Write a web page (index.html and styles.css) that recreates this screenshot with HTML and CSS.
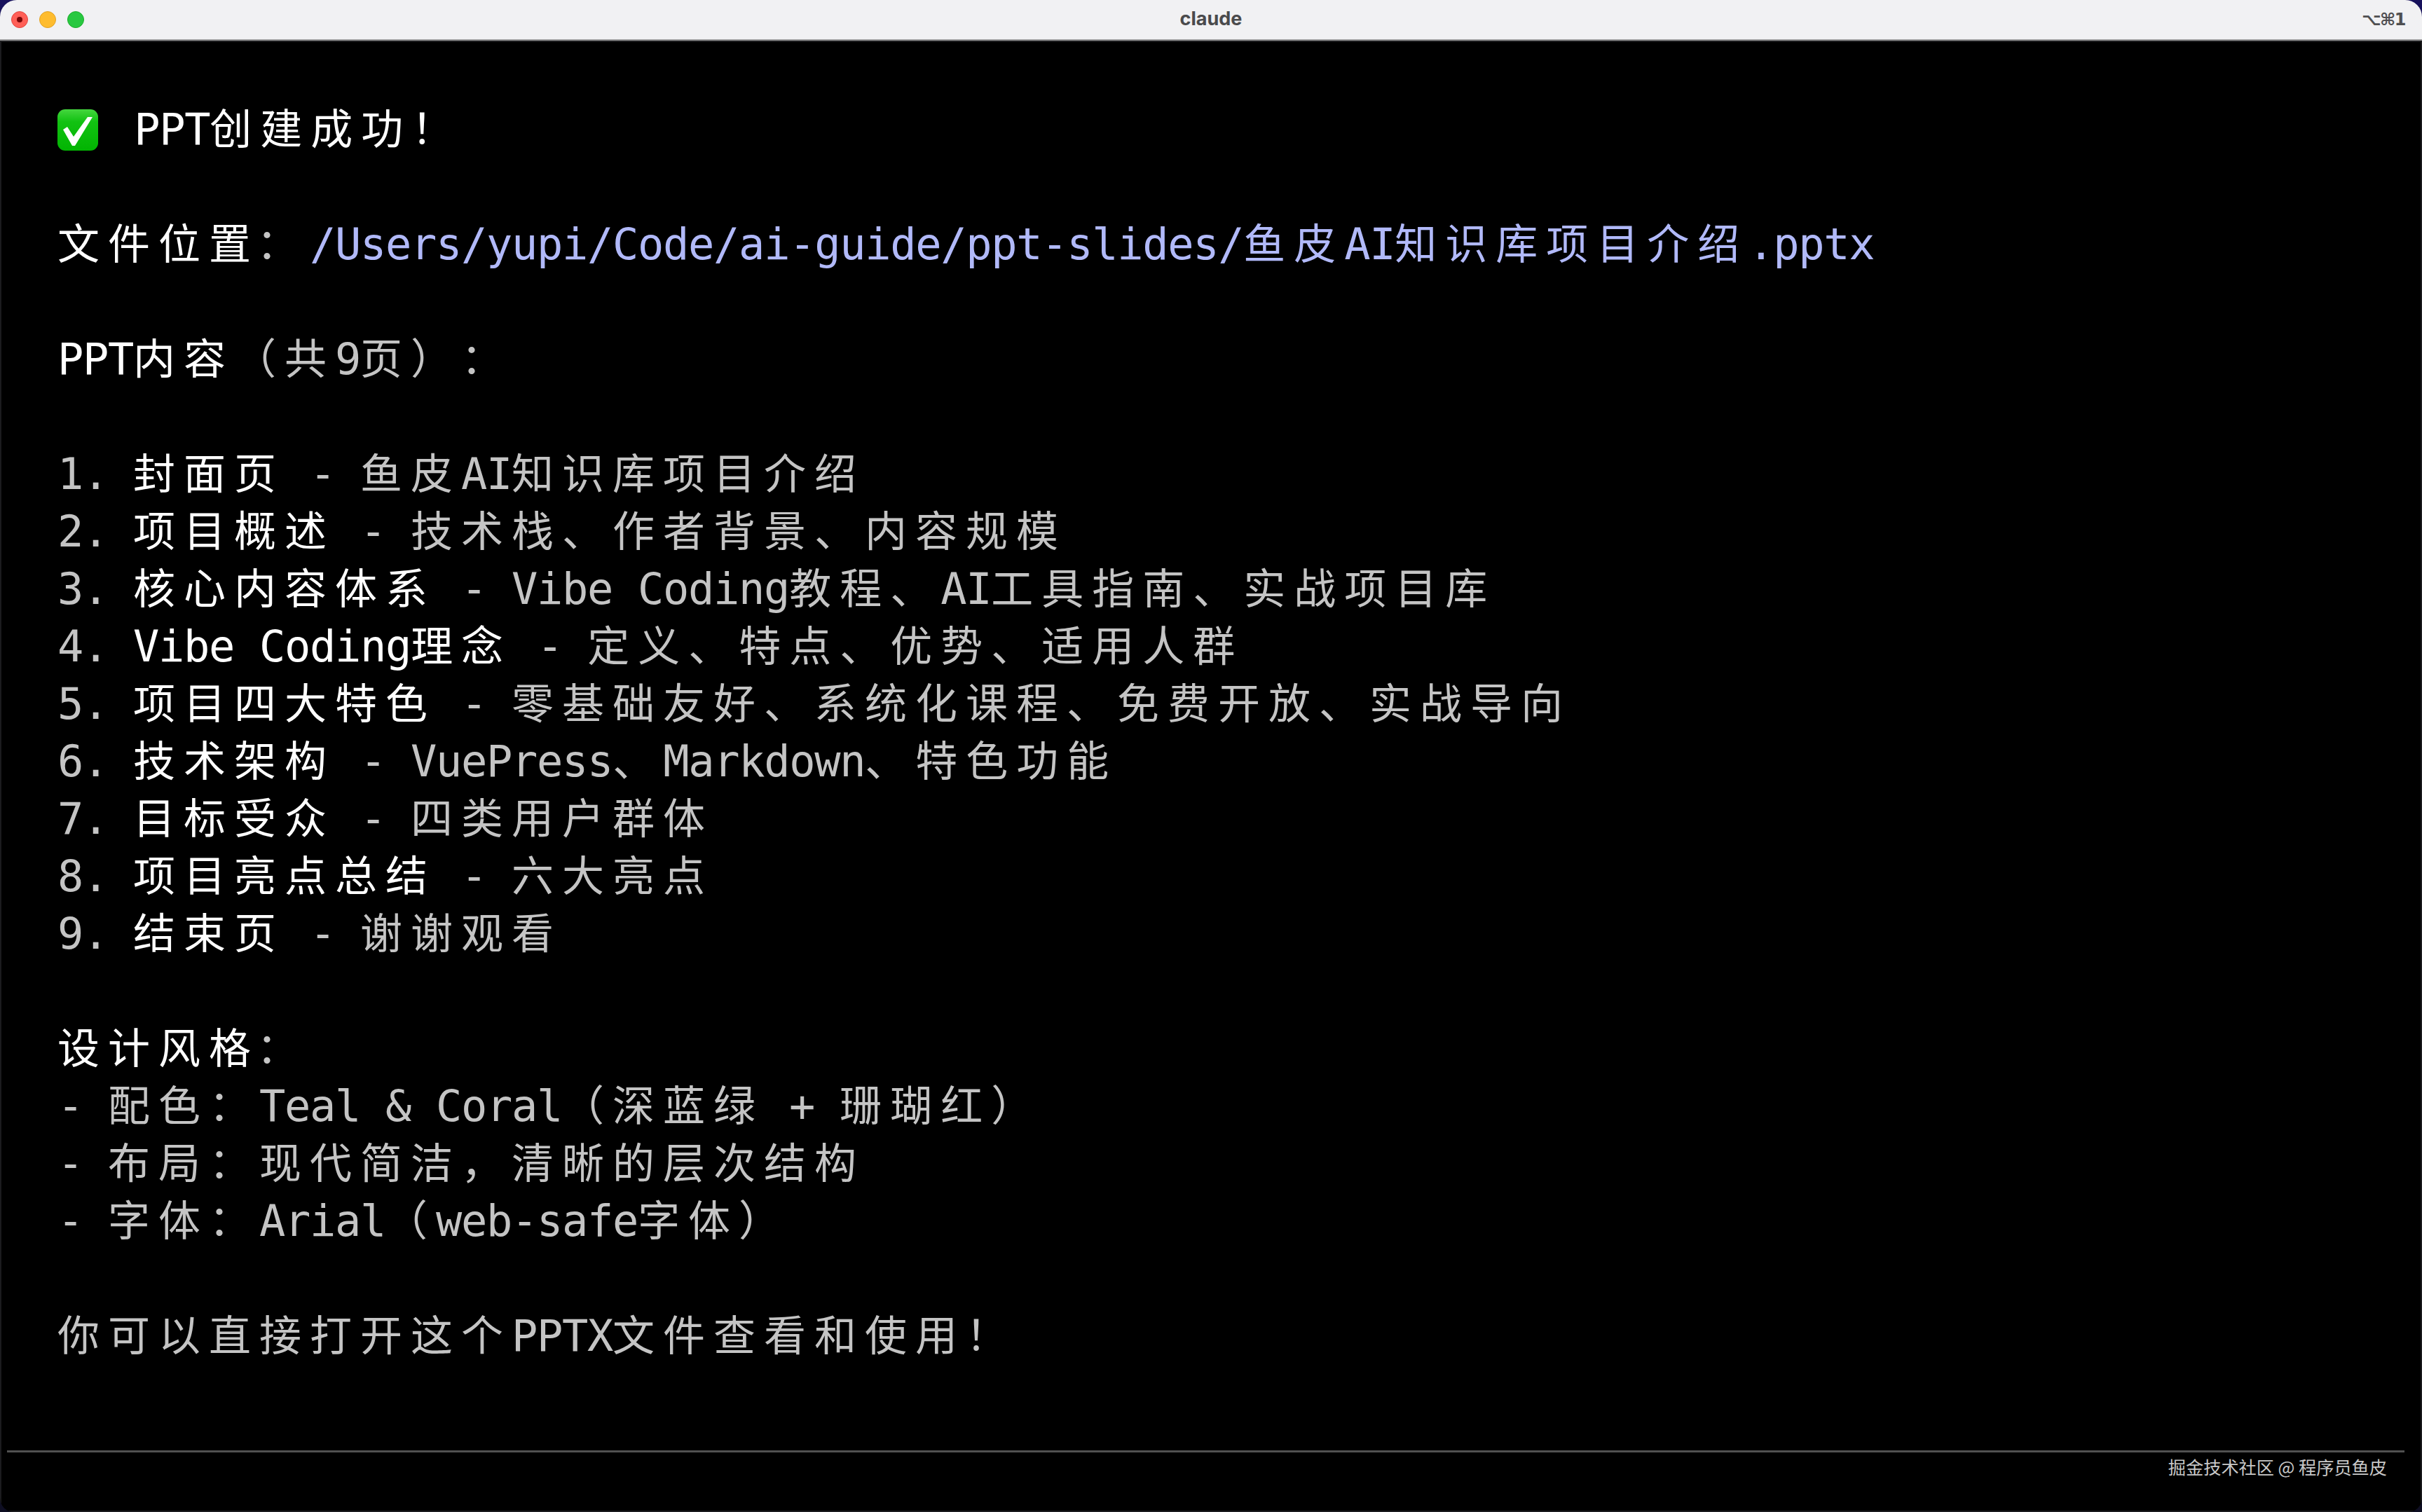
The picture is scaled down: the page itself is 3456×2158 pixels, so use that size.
FILE: index.html
```html
<!DOCTYPE html>
<html lang="zh-CN">
<head>
<meta charset="utf-8">
<title>claude</title>
<link rel="stylesheet" href="styles.css">
</head>
<body>
<div class="window">
  <header class="titlebar">
    <div class="lights">
      <span class="light red"></span>
      <span class="light yellow"></span>
      <span class="light green"></span>
    </div>
    <div class="title">claude</div>
    <div class="shortcut">⌥⌘1</div>
  </header>
  <main class="terminal">
    <div class="output">
      <div class="line w"><span class="emoji"><svg viewBox="0 0 58 59" width="58" height="59"><defs><linearGradient id="g" x1="0" y1="0" x2="0" y2="1"><stop offset="0" stop-color="#45d63f"/><stop offset="0.3" stop-color="#12c212"/><stop offset="1" stop-color="#02b402"/></linearGradient></defs><rect width="58" height="59" rx="11" fill="url(#g)"/><polygon points="8,29 14,25 23,39 43,11 50,11 25,52 21,52" fill="#fff"/></svg></span> PPT<span class="z">创建成功！</span></div>
      <div class="line"></div>
      <div class="line w"><span class="z">文件位置</span><span class="z g colon">：</span><span class="link">/Users/yupi/Code/ai-guide/ppt-slides/<span class="z">鱼皮</span>AI<span class="z">知识库项目介绍</span>.pptx</span></div>
      <div class="line"></div>
      <div class="line w">PPT<span class="z">内容</span><span class="z g">（共</span><span class="g">9</span><span class="z g">页）：</span></div>
      <div class="line"></div>
      <div class="line">1. <span class="w"><span class="z">封面页</span></span> - <span class="z">鱼皮</span>AI<span class="z">知识库项目介绍</span></div>
      <div class="line">2. <span class="w"><span class="z">项目概述</span></span> - <span class="z">技术栈、作者背景、内容规模</span></div>
      <div class="line">3. <span class="w"><span class="z">核心内容体系</span></span> - Vibe Coding<span class="z">教程、</span>AI<span class="z">工具指南、实战项目库</span></div>
      <div class="line">4. <span class="w">Vibe Coding<span class="z">理念</span></span> - <span class="z">定义、特点、优势、适用人群</span></div>
      <div class="line">5. <span class="w"><span class="z">项目四大特色</span></span> - <span class="z">零基础友好、系统化课程、免费开放、实战导向</span></div>
      <div class="line">6. <span class="w"><span class="z">技术架构</span></span> - VuePress<span class="z">、</span>Markdown<span class="z">、特色功能</span></div>
      <div class="line">7. <span class="w"><span class="z">目标受众</span></span> - <span class="z">四类用户群体</span></div>
      <div class="line">8. <span class="w"><span class="z">项目亮点总结</span></span> - <span class="z">六大亮点</span></div>
      <div class="line">9. <span class="w"><span class="z">结束页</span></span> - <span class="z">谢谢观看</span></div>
      <div class="line"></div>
      <div class="line w"><span class="z">设计风格</span><span class="z g colon">：</span></div>
      <div class="line">- <span class="z">配色：</span>Teal &amp; Coral<span class="z">（深蓝绿</span> + <span class="z">珊瑚红）</span></div>
      <div class="line">- <span class="z">布局：现代简洁，清晰的层次结构</span></div>
      <div class="line">- <span class="z">字体：</span>Arial<span class="z">（</span>web-safe<span class="z">字体）</span></div>
      <div class="line"></div>
      <div class="line"><span class="z">你可以直接打开这个</span>PPTX<span class="z">文件查看和使用！</span></div>
    </div>
    <div class="rule"></div>
    <div class="watermark">掘金技术社区 @ 程序员鱼皮</div>
  </main>
</div>
</body>
</html>
```
FILE: styles.css
```css
html, body {
  margin: 0;
  padding: 0;
  width: 3456px;
  height: 2158px;
  overflow: hidden;
  background: linear-gradient(180deg, #17115c 0%, #0e0e22 100%);
}
.window {
  display: flex;
  flex-direction: column;
  height: 2158px;
  border-radius: 24px 24px 20px 20px;
  overflow: hidden;
}
.titlebar {
  flex: none;
  height: 56px;
  border-bottom: 2px solid #9c9c9c;
  background: #f1f1f3;
  display: grid;
  grid-template-columns: 1fr auto 1fr;
  align-items: center;
  padding: 0 24px;
}
.lights {
  display: flex;
  gap: 16px;
  margin-left: -8px;
}
.light {
  width: 24px;
  height: 24px;
  border-radius: 50%;
  box-sizing: border-box;
  display: flex;
  align-items: center;
  justify-content: center;
}
.red { background: #ff5f57; border: 1px solid #e2463f; }
.red::after {
  content: "";
  width: 8px;
  height: 8px;
  border-radius: 50%;
  background: #7a0606;
}
.yellow { background: #febc2e; border: 1px solid #e1a125; }
.green { background: #28c840; border: 1px solid #1dad2b; }
.title {
  font: 700 27px "Inter", "Liberation Sans", sans-serif;
  line-height: 32px;
  margin-bottom: 3px;
  color: #4a4a4c;
}
.shortcut {
  justify-self: end;
  font: bold 24px "DejaVu Sans", sans-serif;
  letter-spacing: -1.5px;
  color: #4f4f51;
}
.terminal {
  flex: 1;
  display: flex;
  flex-direction: column;
  background: #000;
  box-shadow: inset 0 0 0 2px #1c1c1e;
  font-family: "DejaVu Sans Mono", monospace;
  font-size: 62px;
  letter-spacing: -1.32px;
  font-kerning: none;
  text-spacing-trim: space-all;
  color: #c4c4c4;
}
.output {
  flex: none;
  height: 2012px;
  padding: 81px 0 0 82px;
  box-sizing: border-box;
}
.line {
  height: 82px;
  line-height: 82px;
  white-space: pre;
}
.w { color: #fff; }
.g { color: #c4c4c4; }
.link { color: #b1b9f9; }
.z {
  font-family: "Noto Sans CJK SC", sans-serif;
  font-size: 60px;
  letter-spacing: 12px;
}
.colon {
  margin-left: -4px;
  margin-right: 4px;
}
.emoji {
  display: inline-block;
  width: 73.32px;
  height: 59px;
  vertical-align: -9px;
}
.emoji svg { display: block; }
.rule {
  flex: none;
  height: 3px;
  margin: 0 25px 0 10px;
  background: #505050;
}
.watermark {
  flex: none;
  align-self: flex-end;
  margin: 2px 50px 0 0;
  font: 25.2px "Noto Sans CJK SC", sans-serif;
  letter-spacing: 0;
  line-height: 36px;
  color: #c8c8c8;
}
```
